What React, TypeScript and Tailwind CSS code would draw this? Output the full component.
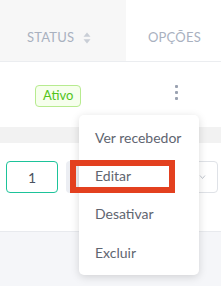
import React from 'react';

const SortIcon = () => (
  <svg width="8" height="12" viewBox="0 0 8 12" className="ml-[9px]">
    <path d="M4 0.5 L7.5 4.8 H0.5 Z" fill="#c9ced6" />
    <path d="M4 11.5 L7.5 7.2 H0.5 Z" fill="#c9ced6" />
  </svg>
);

export default function App() {
  return (
    <div className="relative w-[221px] h-[286px] overflow-hidden bg-[#f5f6f9] font-['Lato',sans-serif]">
      <div className="bg-white">
        {/* header */}
        <div className="flex h-[62px] border-b border-[#ebedf0]">
          <div className="w-[126px] bg-[#f7f7f7] flex items-center pl-[27px] pt-[14px]">
            <span className="text-[13px] text-[#a9b1bf] tracking-[0.2px]">STATUS</span>
            <SortIcon />
          </div>
          <div className="flex-1 flex items-center pl-[22px] pt-[14px]">
            <span className="text-[13px] text-[#a9b1bf] tracking-[0.2px]">OPÇÕES</span>
          </div>
        </div>
        {/* row */}
        <div className="flex h-[65px]">
          <div className="w-[126px] flex items-start pl-[35px] pt-[23px]">
            <span className="h-[22px] px-[7px] flex items-center rounded-[4px] border border-[#b7eb8f] bg-[#f6ffed] text-[#52c41a] text-[13px]">
              Ativo
            </span>
          </div>
          <div className="flex-1 flex flex-col items-start pl-[49px] pt-[23px] gap-[3px]">
            <span className="w-[3px] h-[3px] bg-[#9aa2b1] rounded-[1px]" />
            <span className="w-[3px] h-[3px] bg-[#9aa2b1] rounded-[1px]" />
            <span className="w-[3px] h-[3px] bg-[#9aa2b1] rounded-[1px]" />
          </div>
        </div>
        <div className="h-[16px] bg-[#f2f2f2]" />
        {/* pagination */}
        <div className="h-[89px] border-b border-[#e8eaee] flex items-start pt-[18px] pl-[6px]">
          <div className="w-[52px] h-[32px] rounded-[4px] border border-[#1dc39a] flex items-center justify-center text-[14px] text-[#4a5260]">
            1
          </div>
          <div className="ml-[8px] w-[110px] h-[32px] rounded-[4px] bg-[#eceef3]" />
          <div className="ml-[18px] w-[24px] h-[32px] rounded-[4px] border border-[#dfe2e7] flex items-center pl-[4px]">
            <svg width="7" height="6" viewBox="0 0 7 6">
              <path d="M1 1.5 L3.5 4.5 L6 1.5" stroke="#c3c8d0" fill="none" strokeWidth="1" />
            </svg>
          </div>
        </div>
      </div>

      {/* dropdown menu */}
      <div className="absolute left-[79px] top-[115px] w-[120px] h-[160px] bg-white rounded-[5px] shadow-[0_2px_8px_rgba(0,0,0,0.15)] flex flex-col pt-[3px]">
        {['Ver recebedor', 'Editar', 'Desativar', 'Excluir'].map((t) => (
          <div key={t} className="h-[38.3px] flex items-center pl-[16px] text-[14px] text-[#5f6570]">
            {t}
          </div>
        ))}
      </div>

      {/* red highlight */}
      <div className="absolute left-[70px] top-[160px] w-[105px] h-[33px] border-[6px] border-[#e3401f]" />
    </div>
  );
}
